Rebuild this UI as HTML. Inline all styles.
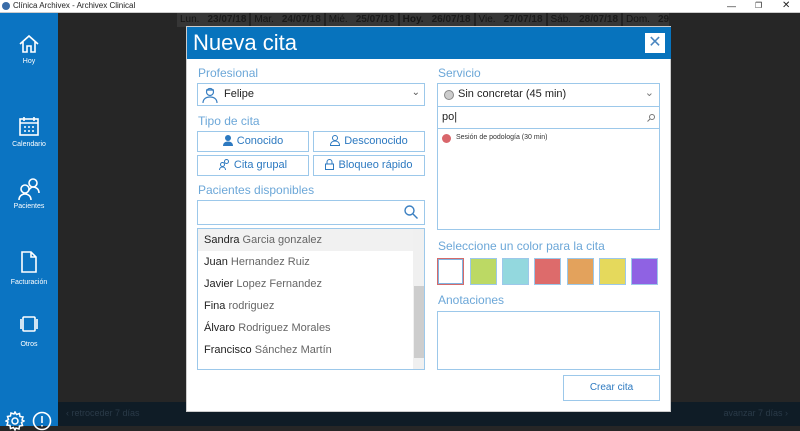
<!DOCTYPE html><html><head><meta charset="utf-8"><style>
*{margin:0;padding:0;box-sizing:border-box}
body{width:800px;height:426px;overflow:hidden;background:#262626;font-family:"Liberation Sans",sans-serif;position:relative}
.a{position:absolute}
.tb{left:0;top:0;width:800px;height:13px;background:#fff;border-bottom:1px solid #ccc;font-size:8px;color:#222;line-height:12px}
.side{left:0;top:13px;width:58px;height:413px;background:#0b74c2;color:#fff;font-size:7px;text-align:center}
.lbl{color:#6ca7d8;font-size:12px}
.box{border:1px solid #9cc8ea;background:#fff}
.btn{border:1px solid #9cc8ea;background:#fff;color:#2c79c0;font-size:11px;text-align:center;line-height:18px}
.btn svg{vertical-align:-2px;margin-right:4px}
.row{height:22px;line-height:22px;padding-left:6px;font-size:11px;color:#666}
.row b{color:#222;font-weight:normal}
.sw{top:258px;width:27px;height:27px;border:1px solid #9cc8ea}
.hd span{display:inline-block;border-right:2px solid #222;padding:0 3px}
.hd i{font-style:normal;color:#1a1a1a;margin-left:8px}
</style></head><body>
<div class="a tb"><span style="position:absolute;left:2px;top:2px;width:8px;height:8px;border-radius:50%;background:#3a6ca8"></span><span style="position:absolute;left:13px">Clínica Archivex - Archivex Clinical</span><span style="position:absolute;left:727px;font-size:9px">—</span><span style="position:absolute;left:755px">❐</span><span style="position:absolute;left:782px;font-size:10px">✕</span></div>
<div class="a side">
<svg class="a" style="left:18px;top:20px" width="22" height="22" viewBox="0 0 22 22" fill="none" stroke="#fff" stroke-width="1.6"><path d="M2 11L11 3l9 8M5 9v10h4v-6h4v6h4V9"/></svg>
<div class="a" style="left:0;top:45px;width:58px">Hoy</div>
<svg class="a" style="left:18px;top:102px" width="22" height="22" viewBox="0 0 22 22" fill="none" stroke="#fff" stroke-width="1.6"><rect x="2" y="4" width="18" height="16"/><path d="M2 8h18M6 2v4M16 2v4"/><path d="M6 12h2M10 12h2M14 12h2M6 16h2M10 16h2M14 16h2" stroke-width="1.4"/></svg>
<div class="a" style="left:0;top:128px;width:58px">Calendario</div>
<svg class="a" style="left:17px;top:164px" width="24" height="24" viewBox="0 0 24 24" fill="none" stroke="#fff" stroke-width="1.6"><circle cx="16" cy="6" r="4"/><circle cx="8" cy="12" r="4"/><path d="M2 23c0-4 3-6 6-6s6 2 6 6M12 13c1-2 3-3 4-3 3 0 6 2 6 6"/></svg>
<div class="a" style="left:0;top:190px;width:58px">Pacientes</div>
<svg class="a" style="left:20px;top:238px" width="18" height="22" viewBox="0 0 18 22" fill="none" stroke="#fff" stroke-width="1.6"><path d="M2 1h9l5 5v15H2zM11 1v5h5"/></svg>
<div class="a" style="left:0;top:266px;width:58px">Facturación</div>
<svg class="a" style="left:18px;top:303px" width="22" height="16" viewBox="0 0 22 16" fill="none" stroke="#fff" stroke-width="1.6"><rect x="5" y="1" width="12" height="14" rx="1"/><path d="M3 3v10M19 3v10"/></svg>
<div class="a" style="left:0;top:328px;width:58px">Otros</div>
<svg class="a" style="left:5px;top:398px" width="20" height="20" viewBox="0 0 20 20" fill="none" stroke="#fff" stroke-width="1.5"><circle cx="10" cy="10" r="3"/><path d="M10 1l1.5 2.5 3-1 .5 3 3 .5-1 3L19 10l-2.5 1.5 1 3-3 .5-.5 3-3-1L10 19l-1.5-2.5-3 1-.5-3-3-.5 1-3L1 10l2.5-1.5-1-3 3-.5.5-3 3 1z"/></svg>
<svg class="a" style="left:32px;top:398px" width="20" height="20" viewBox="0 0 20 20" fill="none" stroke="#fff" stroke-width="1.6"><circle cx="10" cy="10" r="8.5"/><path d="M10 5v7M10 14v1.5"/></svg>
</div>
<div class="a hd" style="left:177px;top:13px;width:492px;height:14px;background:#363636;font-size:10px;color:#151515;line-height:14px;white-space:nowrap;overflow:hidden"><span>Lun.<i><b>23/07/18</b></i></span><span>Mar.<i><b>24/07/18</b></i></span><span>Mié.<i><b>25/07/18</b></i></span><span><b>Hoy.</b><i><b>26/07/18</b></i></span><span>Vie.<i><b>27/07/18</b></i></span><span>Sáb.<i><b>28/07/18</b></i></span><span>Dom.<i><b>29/07/18</b></i></span></div>
<div class="a" style="left:58px;top:402px;width:742px;height:24px;background:#0f1c26;color:#2a3a48;font-size:9px;line-height:22px"><span style="margin-left:8px">‹ retroceder 7 días</span><span style="position:absolute;right:12px">avanzar 7 días ›</span></div>
<div class="a" style="left:186px;top:26px;width:485px;height:386px;background:#fff;border:1px solid #ccc">
<div class="a" style="left:0;top:0;width:484px;height:32px;background:#0773bd;color:#fff;font-size:22px;line-height:32px;padding-left:6px">Nueva cita</div>
<div class="a" style="left:458px;top:6px;width:20px;height:20px;background:#fff;color:#4a86c0;font-size:16px;text-align:center;line-height:20px">✕</div>
</div>
<div class="a lbl" style="left:198px;top:66px">Profesional</div>
<div class="a box" style="left:197px;top:83px;width:228px;height:23px"><svg class="a" style="left:4px;top:2px" width="16" height="18" viewBox="0 0 16 18" fill="none" stroke="#3a7fc1" stroke-width="1.2"><circle cx="8" cy="6" r="3.5"/><path d="M4 4h8M1 17c0-4 3-6 7-6s7 2 7 6"/></svg><span class="a" style="left:26px;top:4px;font-size:11px;color:#222">Felipe</span><span class="a" style="right:4px;top:3px;font-size:10px;color:#555">⌄</span></div>
<div class="a lbl" style="left:198px;top:114px">Tipo de cita</div>
<div class="a btn" style="left:197px;top:131px;width:112px;height:21px"><svg width="10" height="11" viewBox="0 0 10 11" fill="#2c79c0"><circle cx="5" cy="3" r="3"/><path d="M0 11c0-3 2-4.5 5-4.5s5 1.5 5 4.5z"/></svg>Conocido</div>
<div class="a btn" style="left:313px;top:131px;width:112px;height:21px"><svg width="10" height="11" viewBox="0 0 10 11" fill="none" stroke="#2c79c0"><circle cx="5" cy="3" r="2.5"/><path d="M.5 10.5c0-3 2-4.5 4.5-4.5s4.5 1.5 4.5 4.5z"/></svg>Desconocido</div>
<div class="a btn" style="left:197px;top:155px;width:112px;height:21px"><svg width="11" height="11" viewBox="0 0 11 11" fill="none" stroke="#2c79c0"><circle cx="7.5" cy="2.5" r="2"/><circle cx="3.5" cy="5.5" r="2"/><path d="M.5 11c0-2 1.5-3 3-3s3 1 3 3"/></svg>Cita grupal</div>
<div class="a btn" style="left:313px;top:155px;width:112px;height:21px"><svg width="9" height="11" viewBox="0 0 9 11" fill="none" stroke="#2c79c0"><rect x=".5" y="5" width="8" height="5.5"/><path d="M2 5V3a2.5 2.5 0 015 0v2"/></svg>Bloqueo rápido</div>
<div class="a lbl" style="left:198px;top:183px">Pacientes disponibles</div>
<div class="a box" style="left:197px;top:200px;width:228px;height:25px"><svg class="a" style="right:6px;top:4px" width="14" height="14" viewBox="0 0 14 14" fill="none" stroke="#3a7fc1" stroke-width="1.4"><circle cx="5.5" cy="5.5" r="4.5"/><path d="M9 9l4.5 4.5"/></svg></div>
<div class="a box" style="left:197px;top:228px;width:228px;height:142px;overflow:hidden">
<div class="row" style="background:#f1f1f1;width:215px"><b>Sandra</b> Garcia gonzalez</div>
<div class="row"><b>Juan</b> Hernandez Ruiz</div>
<div class="row"><b>Javier</b> Lopez Fernandez</div>
<div class="row"><b>Fina</b> rodriguez</div>
<div class="row"><b>Álvaro</b> Rodriguez Morales</div>
<div class="row"><b>Francisco</b> Sánchez Martín</div>
<div class="a" style="left:215px;top:0;width:12px;height:141px;background:#f0f0f0"></div>
<div class="a" style="left:216px;top:57px;width:10px;height:72px;background:#cdcdcd"></div>
</div>
<div class="a lbl" style="left:438px;top:66px">Servicio</div>
<div class="a box" style="left:437px;top:83px;width:223px;height:24px"><span class="a" style="left:6px;top:6px;width:10px;height:10px;border-radius:50%;background:#ccc;border:1px solid #888"></span><span class="a" style="left:20px;top:4px;font-size:11px;color:#222">Sin concretar (45 min)</span><span class="a" style="right:5px;top:2px;font-size:11px;color:#777">⌄</span></div>
<div class="a box" style="left:437px;top:106px;width:223px;height:23px"><span class="a" style="left:4px;top:4px;font-size:11px;color:#222">po|</span><svg class="a" style="right:4px;top:7px" width="8" height="8" viewBox="0 0 8 8" fill="none" stroke="#777"><circle cx="5" cy="3" r="2.5"/><path d="M3 5L.5 7.5"/></svg></div>
<div class="a box" style="left:437px;top:128px;width:223px;height:102px"><span class="a" style="left:4px;top:5px;width:9px;height:9px;border-radius:50%;background:#d9666b"></span><span class="a" style="left:18px;top:5px;font-size:7px;color:#333">Sesión de podología (30 min)</span></div>
<div class="a lbl" style="left:438px;top:239px">Seleccione un color para la cita</div>
<div class="a sw" style="left:437px;border:1px solid #d46a6a;box-shadow:inset 0 0 0 1px #7fb3e0;background:#fff"></div>
<div class="a sw" style="left:470px;background:#bcd964"></div>
<div class="a sw" style="left:502px;background:#93d8de"></div>
<div class="a sw" style="left:534px;background:#dd6b6b"></div>
<div class="a sw" style="left:567px;background:#e3a25c"></div>
<div class="a sw" style="left:599px;background:#e5d95c"></div>
<div class="a sw" style="left:631px;background:#8f62e3"></div>
<div class="a lbl" style="left:438px;top:293px">Anotaciones</div>
<div class="a box" style="left:437px;top:311px;width:223px;height:59px"></div>
<div class="a btn" style="left:563px;top:375px;width:97px;height:26px;line-height:24px;font-size:10px">Crear cita</div>
</body></html>
